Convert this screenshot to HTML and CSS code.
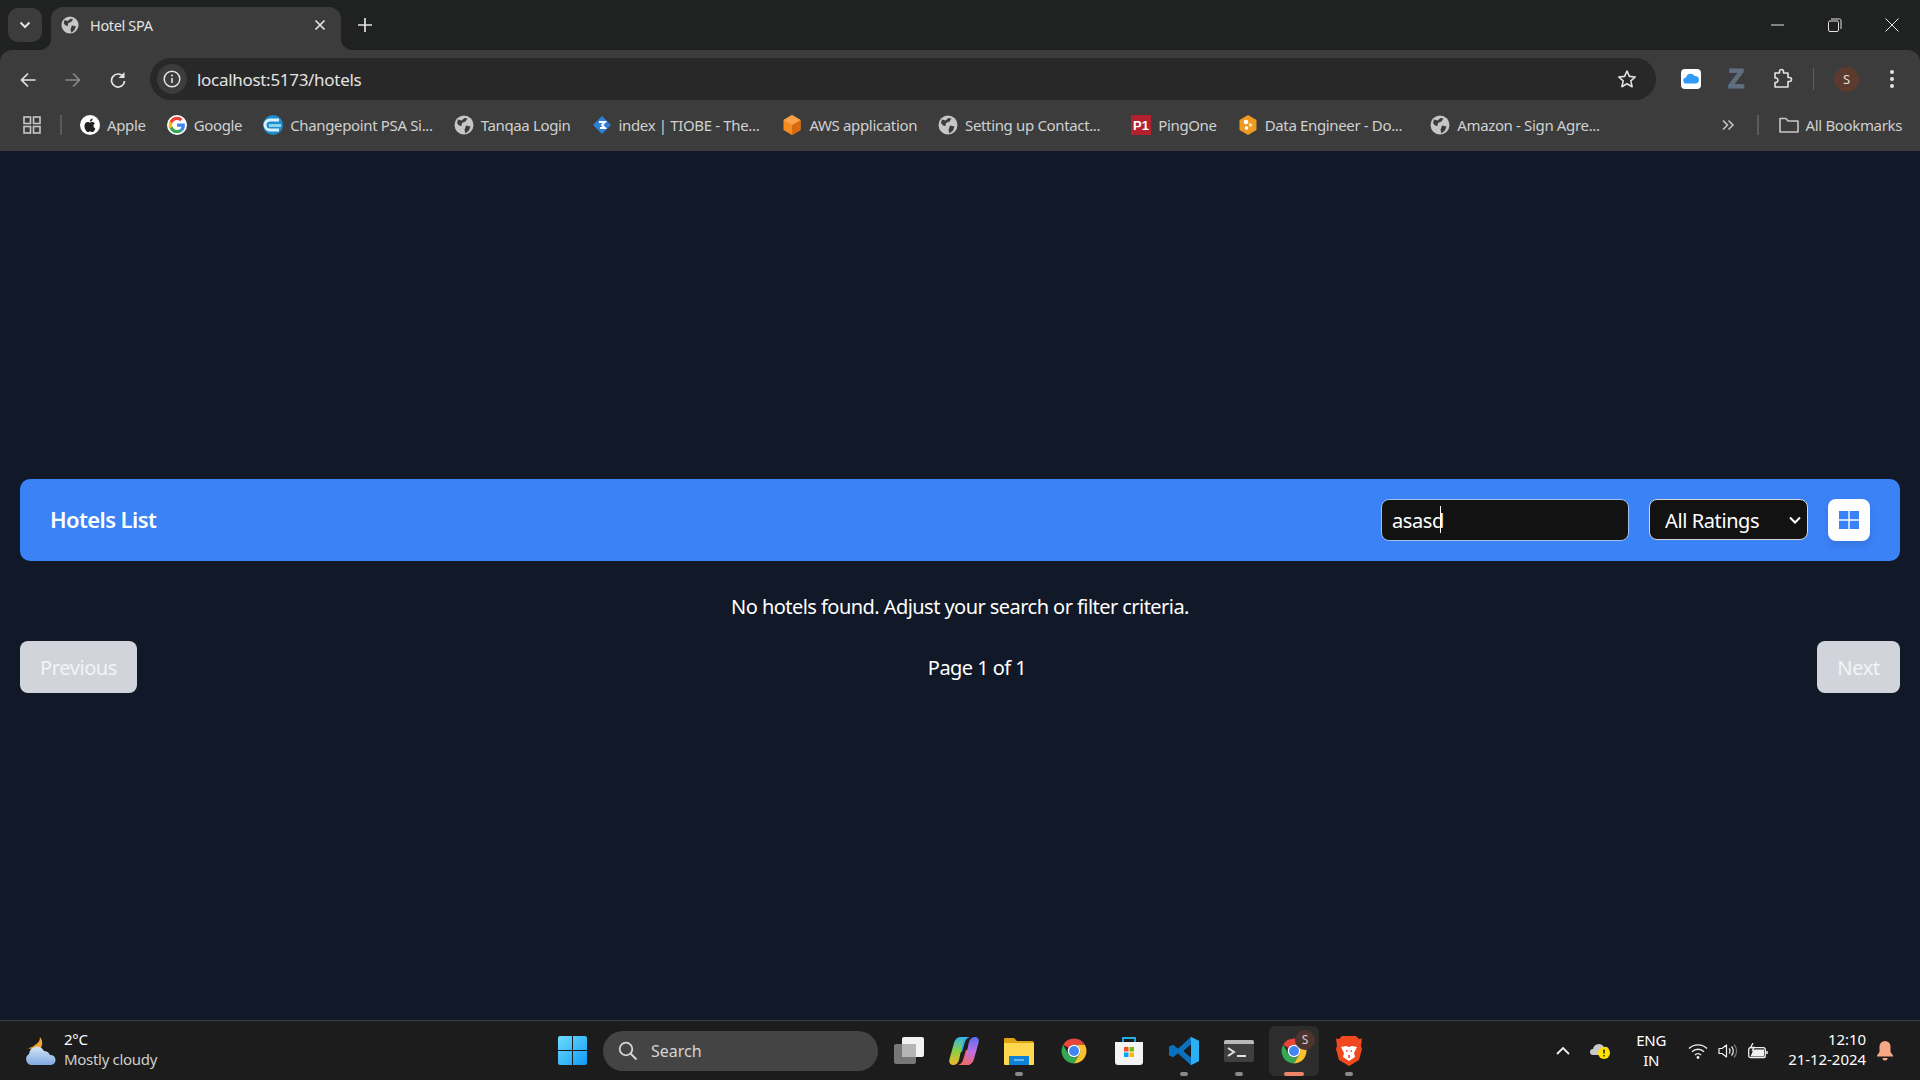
FILE: index.html
```html
<!DOCTYPE html>
<html lang="en">
<head>
  <meta charset="UTF-8" />
  <meta name="viewport" content="width=device-width, initial-scale=1.0"/>
  <title>Hotel SPA</title>
  <link rel="stylesheet" href="styles.css">
</head>
<body>
  <svg class="defs" aria-hidden="true">
    <defs>
      <linearGradient id="winblue" x1="0" y1="0" x2="1" y2="1"><stop offset="0" stop-color="#6fdcff"/><stop offset="1" stop-color="#0f9bf5"/></linearGradient>
      <linearGradient id="cloudg" x1="0" y1="0" x2="0" y2="1"><stop offset="0" stop-color="#d5e4f8"/><stop offset="1" stop-color="#7fa9e0"/></linearGradient>
      <linearGradient id="copa" x1="0" y1="0" x2="0" y2="1"><stop offset="0" stop-color="#2fb6e8"/><stop offset=".5" stop-color="#8bd044"/><stop offset="1" stop-color="#f4b52e"/></linearGradient>
      <linearGradient id="copb" x1="0" y1="0" x2="0" y2="1"><stop offset="0" stop-color="#5b6cf0"/><stop offset=".5" stop-color="#b96fe8"/><stop offset="1" stop-color="#f0696a"/></linearGradient>
    </defs>
    <symbol id="globe" viewBox="0 0 20 20">
      <circle cx="10" cy="10" r="9.5" fill="#c4c7c5"/>
      <path d="M4 4.5l3.5 1 3-2.5 3 .5-2 3-3.5 1.5-.5 3-2.5-.5-2-2.5zM12 10.5l4.5 1-1.5 4-3.5 3-1-3.5z" fill="#3c3c3c"/>
    </symbol>
    <symbol id="chrome" viewBox="0 0 48 48">
      <path d="M24 4A20 20 0 0 1 41.32 14H24A10 10 0 0 0 15.34 19L6.68 14A20 20 0 0 1 24 4Z" fill="#e8453c"/>
      <path d="M6.68 14A20 20 0 0 0 24 44L32.66 29A10 10 0 0 1 15.34 29Z" fill="#34a853"/>
      <path d="M41.32 14H24A10 10 0 0 1 32.66 29L24 44A20 20 0 0 0 41.32 14Z" fill="#fbc02d"/>
      <circle cx="24" cy="24" r="10" fill="#fff"/>
      <circle cx="24" cy="24" r="8" fill="#4285f4"/>
    </symbol>
  </svg>

  <header class="chrome">
    <div class="tabstrip">
      <div class="tabsearch">
        <svg width="12" height="8" viewBox="0 0 12 8"><path d="M1.5 1.5L6 6l4.5-4.5" fill="none" stroke="#e3e3e3" stroke-width="2"/></svg>
      </div>
      <div class="tab">
        <svg class="fav tab-fav"><use href="#globe"/></svg>
        <span class="tab-title">Hotel SPA</span>
        <svg class="tab-close" width="12" height="12" viewBox="0 0 12 12"><path d="M1.5 1.5l9 9M10.5 1.5l-9 9" stroke="#e3e3e3" stroke-width="1.7"/></svg>
      </div>
      <svg class="newtab" width="14" height="14" viewBox="0 0 14 14"><path d="M7 0v14M0 7h14" stroke="#e3e3e3" stroke-width="1.7"/></svg>
      <div class="winctrls">
        <svg width="14" height="14" viewBox="0 0 14 14"><path d="M0 7h13" stroke="#e3e3e3"/></svg>
        <svg width="14" height="14" viewBox="0 0 14 14"><rect x=".5" y="3" width="10" height="10.5" rx="1.5" fill="none" stroke="#e3e3e3"/><path d="M3 1h8.5a1.5 1.5 0 0 1 1.5 1.5V11" fill="none" stroke="#e3e3e3"/></svg>
        <svg width="14" height="14" viewBox="0 0 14 14"><path d="M.5.5l13 13M13.5.5l-13 13" stroke="#e3e3e3"/></svg>
      </div>
    </div>

    <div class="toolbar">
      <svg class="navbtn" viewBox="0 0 16 16"><path d="M15.5 8H1.5M8 1.5L1.5 8 8 14.5" fill="none" stroke="#e3e3e3" stroke-width="1.7"/></svg>
      <svg class="navbtn" viewBox="0 0 16 16"><path d="M.5 8h14M8 1.5L14.5 8 8 14.5" fill="none" stroke="#8a8a8a" stroke-width="1.7"/></svg>
      <svg class="navbtn" viewBox="0 0 16 16"><path d="M13.5 5A6.5 6.5 0 1 0 14.5 9" fill="none" stroke="#e3e3e3" stroke-width="1.7"/><path d="M14.5 0v6h-6z" fill="#e3e3e3"/></svg>
      <div class="omnibox">
        <div class="siteinfo">
          <svg width="18" height="18" viewBox="0 0 18 18"><circle cx="9" cy="9" r="7.8" fill="none" stroke="#e3e3e3" stroke-width="1.5"/><path d="M9 8v5" stroke="#e3e3e3" stroke-width="1.6"/><circle cx="9" cy="5.5" r="1" fill="#e3e3e3"/></svg>
        </div>
        <span class="url">localhost:5173/hotels</span>
        <svg class="star" width="20" height="20" viewBox="0 0 20 20"><path d="M10 2l2.4 5.4 5.8.6-4.4 3.9 1.3 5.8L10 14.7l-5.1 3 1.3-5.8L1.8 8l5.8-.6z" fill="none" stroke="#e3e3e3" stroke-width="1.6" stroke-linejoin="round"/></svg>
      </div>
      <div class="exts">
        <svg width="20" height="20" viewBox="0 0 20 20"><rect width="20" height="20" rx="4" fill="#fff"/><path d="M5.5 14.5a3 3 0 0 1-.4-6A4.5 4.5 0 0 1 13.4 7a3.8 3.8 0 0 1 1.4 7.5z" fill="#2f9bf5"/></svg>
        <span class="ext-z">Z</span>
        <svg width="22" height="22" viewBox="0 0 22 22"><path d="M4 5h4.5V3.5a2 2 0 0 1 4 0V5H17v4.5h1.5a2 2 0 0 1 0 4H17V19H4v-4.5h1.5a2.5 2.5 0 0 0 0-4.5H4z" fill="none" stroke="#e3e3e3" stroke-width="1.6" stroke-linejoin="round"/></svg>
        <span class="tb-sep"></span>
        <span class="avatar">S</span>
        <svg class="dots" width="6" height="20" viewBox="0 0 6 20"><circle cx="3" cy="3" r="2" fill="#e3e3e3"/><circle cx="3" cy="10" r="2" fill="#e3e3e3"/><circle cx="3" cy="17" r="2" fill="#e3e3e3"/></svg>
      </div>
    </div>

    <div class="bookmarks">
      <svg class="apps" width="18" height="18" viewBox="0 0 18 18"><g fill="none" stroke="#c7c7c7" stroke-width="1.6"><rect x="1" y="1" width="6.5" height="6.5"/><rect x="10.5" y="1" width="6.5" height="6.5"/><rect x="1" y="10.5" width="6.5" height="6.5"/><rect x="10.5" y="10.5" width="6.5" height="6.5"/></g></svg>
      <span class="bm-sep"></span>
      <a class="bm">
        <svg class="fav" viewBox="0 0 20 20"><circle cx="10" cy="10" r="10" fill="#fff"/><path d="M13.5 10.8c0-1.7 1.3-2.400 1.400-2.500-.8-1.100-2-1.300-2.400-1.300-1-.1-2 .6-2.500.6s-1.300-.6-2.200-.6c-1.100 0-2.200.7-2.800 1.700-1.200 2-.3 5.100.9 6.700.6.800 1.200 1.700 2.100 1.700s1.200-.5 2.200-.5 1.300.5 2.200.5 1.500-.8 2-1.700c.6-.9.900-1.800.9-1.900-.1 0-1.800-.7-1.800-2.700zM11.900 5.700c.5-.6.800-1.400.7-2.200-.7 0-1.500.5-2 1-.4.500-.8 1.300-.7 2.100.8.100 1.500-.4 2-.9z" fill="#222"/></svg>
        <span>Apple</span>
      </a>
      <a class="bm">
        <svg class="fav" viewBox="-5 -5 58 58"><circle cx="24" cy="24" r="29" fill="#fff"/><path d="M24 9.500c3.540 0 6.710 1.220 9.210 3.600l6.850-6.850C35.900 2.380 30.470 0 24 0 14.620 0 6.510 5.380 2.560 13.220l7.980 6.190C12.430 13.720 17.740 9.500 24 9.500z" fill="#ea4335"/><path d="M46.980 24.550c0-1.570-.15-3.090-.38-4.550H24v9.020h12.940c-.58 2.960-2.260 5.480-4.780 7.180l7.730 6c4.510-4.180 7.090-10.360 7.090-17.650z" fill="#4285f4"/><path d="M10.530 28.590c-.48-1.450-.76-2.990-.76-4.590s.27-3.140.76-4.590l-7.980-6.190C.92 16.460 0 20.120 0 24c0 3.880.92 7.540 2.560 10.780l7.970-6.190z" fill="#fbbc05"/><path d="M24 48c6.480 0 11.930-2.130 15.890-5.810l-7.730-6c-2.150 1.450-4.920 2.300-8.160 2.300-6.260 0-11.570-4.220-13.470-9.910l-7.980 6.190C6.510 42.620 14.620 48 24 48z" fill="#34a853"/></svg>
        <span>Google</span>
      </a>
      <a class="bm">
        <svg class="fav" viewBox="0 0 20 20"><circle cx="10" cy="10" r="10" fill="#1c8ed0"/><path d="M16 5H7a5 5 0 0 0 0 10h9" fill="none" stroke="#d8f0fb" stroke-width="3"/><path d="M6 9h12v3H6z" fill="#8fd2f0"/></svg>
        <span>Changepoint PSA Si...</span>
      </a>
      <a class="bm"><svg class="fav"><use href="#globe"/></svg><span>Tanqaa Login</span></a>
      <a class="bm bm-index">
        <svg class="fav" viewBox="0 0 20 20"><path d="M10 1l9 9-9 9-9-9z" fill="#2f7fd6"/><path d="M7 7h6l-3 3 3 3H8" fill="none" stroke="#fff" stroke-width="1.8"/></svg>
        <span>index | TIOBE - The...</span>
      </a>
      <a class="bm">
        <svg class="fav" viewBox="0 0 20 20"><path d="M10 0l8.500 5v10L10 20l-8.500-5V5z" fill="#f58a1f"/><path d="M10 10l8.500-5v10L10 20z" fill="#d96a12"/><path d="M10 0l8.500 5L10 10 1.500 5z" fill="#fba24a"/></svg>
        <span>AWS application</span>
      </a>
      <a class="bm bm-setting"><svg class="fav"><use href="#globe"/></svg><span>Setting up Contact...</span></a>
      <a class="bm">
        <svg class="fav" viewBox="0 0 20 20"><rect width="20" height="20" fill="#b3212f"/><text class="p1" x="10" y="15" text-anchor="middle">P1</text></svg>
        <span>PingOne</span>
      </a>
      <a class="bm bm-data">
        <svg class="fav" viewBox="0 0 20 20"><path d="M10 0l8.500 5v10L10 20l-8.500-5V5z" fill="#ef9a22"/><circle cx="8" cy="7" r="2.300" fill="#fff"/><circle cx="12.500" cy="10" r="1.800" fill="#fde3b8"/><circle cx="8.500" cy="13" r="1.800" fill="#fff"/></svg>
        <span>Data Engineer - Do...</span>
      </a>
      <a class="bm"><svg class="fav"><use href="#globe"/></svg><span>Amazon - Sign Agre...</span></a>
      <svg class="bm-more" width="12" height="12" viewBox="0 0 12 12"><path d="M1 1.500L5.500 6 1 10.500M6.500 1.500L11 6l-4.500 4.500" fill="none" stroke="#c7c7c7" stroke-width="1.500"/></svg>
      <span class="bm-sep bm-sep-right"></span>
      <a class="bm bm-all">
        <svg class="fav" viewBox="0 0 20 20"><path d="M1 3.500h6l2 2.500h10v11H1z" fill="none" stroke="#c7c7c7" stroke-width="1.600" stroke-linejoin="round"/></svg>
        <span>All Bookmarks</span>
      </a>
    </div>
  </header>

  <main class="page">
    <section class="hotels-bar">
      <h1>Hotels List</h1>
      <div class="hotels-controls">
        <div class="search-box">
          <input type="text" class="search-input" value="asasd" />
          <span class="caret"></span>
        </div>
        <select class="rating-select">
          <option>All Ratings</option>
        </select>
        <button class="view-toggle" aria-label="Grid view">
          <svg width="20" height="18" viewBox="0 0 20 18"><path d="M0 0h9.300v8.300H0zM10.700 0H20v8.300h-9.300zM0 9.700h9.300V18H0zM10.700 9.700H20V18h-9.300z" fill="#3b82f6"/></svg>
        </button>
      </div>
    </section>

    <p class="empty-msg">No hotels found. Adjust your search or filter criteria.</p>

    <div class="pagination">
      <button class="page-btn page-prev" disabled>Previous</button>
      <span class="page-info">Page 1 of 1</span>
      <button class="page-btn page-next" disabled>Next</button>
    </div>
  </main>

  <footer class="taskbar">
    <div class="weather">
      <svg width="32" height="30" viewBox="0 0 32 30"><path d="M16 1a9 9 0 0 1-1 13L2 12a10 10 0 0 0 9-3 9 9 0 0 0 5-8z" fill="#f3a531"/><path d="M7 29a6 6 0 0 1-2-11 8 8 0 0 1 15-3 7 7 0 0 1 6 4 5 5 0 0 1 1 10z" fill="url(#cloudg)"/></svg>
      <div class="weather-text">
        <span class="temp">2°C</span>
        <span class="cond">Mostly cloudy</span>
      </div>
    </div>

    <div class="tb-center">
      <svg class="tb-start" width="29" height="29" viewBox="0 0 29 29"><path d="M0 2a2 2 0 0 1 2-2h12v14H0zM15 0h12a2 2 0 0 1 2 2v12H15zM0 15h14v14H2a2 2 0 0 1-2-2zM15 15h14v12a2 2 0 0 1-2 2H15z" fill="url(#winblue)"/></svg>
      <div class="tb-search">
        <svg width="20" height="20" viewBox="0 0 20 20"><circle cx="8" cy="8" r="6.300" fill="none" stroke="#d5d5d5" stroke-width="1.800"/><path d="M12.500 12.500l6 6" stroke="#d5d5d5" stroke-width="2"/></svg>
        <span>Search</span>
      </div>
      <svg class="tb-task" width="30" height="30" viewBox="0 0 30 30"><rect y="8" width="22" height="20" rx="2" fill="#777"/><rect x="8" y="1" width="22" height="20" rx="2" fill="#f2f2f2"/><rect x="8" y="8" width="14" height="13" fill="#b5b5b5"/></svg>
      <div class="tb-app">
        <svg width="30" height="30" viewBox="0 0 30 30"><path d="M12 1h11c-4 0-6 2-7 5l-3 10H4L6 7c1-4 3-6 6-6z" fill="#2fa8e8"/><path d="M18 29H7c4 0 6-2 7-5l3-10h9l-2 9c-1 4-3 6-6 6z" fill="#f0696a"/><path d="M12 1h8c-3 0-5 2-6 5L10 24c-.7 3-3 5-6 5-3 0-4.500-2.500-3.500-6L5 7c1-4 4-6 7-6z" fill="url(#copa)"/><path d="M18 29h-8c3 0 5-2 6-5l4-18c.7-3 3-5 6-5 3 0 4.500 2.500 3.500 6L25 23c-1 4-4 6-7 6z" fill="url(#copb)"/></svg>
      </div>
      <div class="tb-app tb-run">
        <svg width="30" height="30" viewBox="0 0 30 30"><path d="M0 3a1 1 0 0 1 1-1h9l3 3h15a2 2 0 0 1 2 2v3H0z" fill="#e0a412"/><path d="M0 7h30v21a1 1 0 0 1-1 1H1a1 1 0 0 1-1-1z" fill="#ffd84f"/><path d="M5 20h20v9H5z" fill="#0c82d8"/><path d="M10 24h10" stroke="#7fcaf5" stroke-width="1.500"/></svg>
      </div>
      <div class="tb-app"><svg width="30" height="30"><use href="#chrome"/></svg></div>
      <div class="tb-app">
        <svg width="30" height="30" viewBox="0 0 30 30"><path d="M9 6V2h12v4" fill="none" stroke="#22b2e8" stroke-width="1.800"/><path d="M1 6h28v20a3 3 0 0 1-3 3H4a3 3 0 0 1-3-3z" fill="#f4f4f4"/><path d="M10 11h4.500v4.500H10z" fill="#f25022"/><path d="M15.500 11H20v4.500h-4.500z" fill="#7fba00"/><path d="M10 16.500h4.500V21H10z" fill="#00a4ef"/><path d="M15.500 16.500H20V21h-4.500z" fill="#ffb900"/></svg>
      </div>
      <div class="tb-app tb-run">
        <svg width="30" height="30" viewBox="0 0 30 30"><path d="M22 1l8 4v20l-8 4-13-12-5 4-4-2V11l4-2 5 4z" fill="#1f9cf0"/><path d="M22 1l8 4v20l-8 4z" fill="#2bb0f5"/><path d="M22 8l-8 7 8 7z" fill="#1c1c1c"/><path d="M9 13l-5-4-4 2v8l4 2 5-4 13 12V22l-8-7 8-7V1z" fill="#0a70c0"/></svg>
      </div>
      <div class="tb-app tb-run">
        <svg width="30" height="22" viewBox="0 0 30 22"><rect width="30" height="22" rx="2" fill="#3f3f3f"/><path d="M0 2a2 2 0 0 1 2-2h26a2 2 0 0 1 2 2v2H0z" fill="#b8b8b8"/><path d="M4 8l6 4-6 4" fill="none" stroke="#e0e0e0" stroke-width="2"/><path d="M13 16h9" stroke="#e0e0e0" stroke-width="2"/></svg>
      </div>
      <div class="tb-app tb-active">
        <svg width="30" height="30"><use href="#chrome"/></svg>
        <span class="tb-badge">S</span>
      </div>
      <div class="tb-app tb-run">
        <svg width="26" height="30" viewBox="0 0 26 30"><path d="M6 0h14l3 3 3-.5-1 7.500 1 3-3 11-10 6-10-6L0 13l1-3-1-7.500L3 3z" fill="#f1491f"/><path d="M5 11l5-1 3 1 3-1 5 1-3 6 1 4-6 4-6-4 1-4z" fill="#fff"/><path d="M10 15h1.500M14.500 15H16M13 19v3" stroke="#f1491f" stroke-width="1.600"/></svg>
      </div>
    </div>

    <div class="tray">
      <svg class="tray-chev" width="14" height="9" viewBox="0 0 14 9"><path d="M1 8l6-6 6 6" fill="none" stroke="#f0f0f0" stroke-width="1.800"/></svg>
      <svg class="tray-od" width="20" height="17" viewBox="0 0 20 17"><path d="M3 13a3 3 0 0 1 0-6 6 6 0 0 1 11-2 4 4 0 0 1 2 8z" fill="#c9c9c9"/><circle cx="14" cy="11" r="6" fill="#ffe000"/><path d="M14 7.500v4M14 13v1.500" stroke="#222" stroke-width="1.500"/></svg>
      <div class="tray-lang"><span>ENG</span><span>IN</span></div>
      <div class="tray-icons">
        <svg width="20" height="16" viewBox="0 0 20 16"><path d="M1 5.500a13 13 0 0 1 18 0M4 8.800a8.500 8.500 0 0 1 12 0M7 12a4 4 0 0 1 6 0" fill="none" stroke="#f0f0f0" stroke-width="1.400"/><circle cx="10" cy="14.500" r="1.400" fill="#f0f0f0"/></svg>
        <svg width="20" height="16" viewBox="0 0 20 16"><path d="M1 5.500h3L8.500 2v12L4 10.500H1z" fill="none" stroke="#f0f0f0" stroke-width="1.200" stroke-linejoin="round"/><path d="M11 5.500a3.500 3.500 0 0 1 0 5M13.500 3.500a6.500 6.500 0 0 1 0 9" fill="none" stroke="#f0f0f0" stroke-width="1.200"/><path d="M16 1.500a9.500 9.500 0 0 1 0 13" fill="none" stroke="#777" stroke-width="1.200"/></svg>
        <svg width="20" height="16" viewBox="0 0 20 16"><rect x=".7" y="4.700" width="16.600" height="10" rx="2" fill="none" stroke="#f0f0f0" stroke-width="1.300"/><path d="M2.500 13.500l3-7H16v7z" fill="#f0f0f0"/><path d="M19 8v3" stroke="#f0f0f0" stroke-width="1.500"/><path d="M5 0L2.500 4.500H6L4 8" fill="none" stroke="#f0f0f0" stroke-width="1.300"/></svg>
      </div>
      <div class="tray-clock"><span>12:10</span><span>21-12-2024</span></div>
      <svg class="tray-bell" width="16" height="20" viewBox="0 0 16 20"><path d="M8 0a5.500 5.500 0 0 1 5.500 5.500V11l2.500 3.500v1H0v-1L2.500 11V5.500A5.500 5.500 0 0 1 8 0z" fill="#f6a886"/><path d="M5.500 17h5a2.500 2.500 0 0 1-5 0z" fill="#f6a886"/></svg>
    </div>
  </footer>
</body>
</html>
```

FILE: styles.css
```css
* {
  box-sizing: border-box;
}
html, body {
  margin: 0;
  height: 100%;
}
body {
  display: flex;
  flex-direction: column;
  width: 1920px;
  height: 1080px;
  overflow: hidden;
  background-color: #111827;
  color: #fff;
  font-family: "Noto Sans", "Open Sans", sans-serif;
}
.defs {
  width: 0;
  height: 0;
  flex: none;
}
svg {
  flex: none;
  display: block;
}
.fav {
  width: 20px;
  height: 20px;
}

/* browser frame */
.chrome {
  flex: none;
  height: 151px;
  display: flex;
  flex-direction: column;
  background-color: #202221;
  font-size: 15px;
  letter-spacing: -0.35px;
}
.tabstrip {
  height: 50px;
  display: flex;
  align-items: flex-end;
  padding-left: 8px;
}
.tabsearch {
  width: 34px;
  height: 34px;
  margin-bottom: 8px;
  margin-right: 9px;
  display: flex;
  align-items: center;
  justify-content: center;
  background-color: #3c3c3c;
  border-radius: 10px;
}
.tab {
  position: relative;
  width: 290px;
  height: 43px;
  display: flex;
  align-items: center;
  padding: 0 15px 7px 10px;
  gap: 9px;
  background-color: #3c3c3c;
  border-radius: 12px 12px 0 0;
  color: #e3e3e3;
  font-size: 14.5px;
}
.tab::before,
.tab::after {
  content: "";
  position: absolute;
  bottom: 0;
  width: 12px;
  height: 12px;
}
.tab::before {
  left: -12px;
  background: radial-gradient(circle at 0 0, transparent 12px, #3c3c3c 12.5px);
}
.tab::after {
  right: -12px;
  background: radial-gradient(circle at 100% 0, transparent 12px, #3c3c3c 12.5px);
}
.tab-fav {
  width: 18px;
  height: 18px;
  margin-right: 2px;
}
.tab-title {
  flex: 1;
}
.newtab {
  margin: 0 0 18px 17px;
}
.winctrls {
  margin-left: auto;
  align-self: center;
  display: flex;
  gap: 43px;
  padding-right: 21px;
}
.toolbar {
  height: 50px;
  padding-top: 8px;
  display: flex;
  align-items: flex-start;
  padding-left: 20px;
  background-color: #3c3c3c;
  border-radius: 12px 12px 0 0;
}
.navbtn {
  width: 16px;
  height: 16px;
  margin: 14px 29px 0 0;
}
.omnibox {
  width: 1506px;
  height: 42px;
  margin-left: -5px;
  display: flex;
  align-items: center;
  padding: 0 19px 0 7px;
  background-color: #282828;
  border-radius: 21px;
}
.siteinfo {
  width: 30px;
  height: 30px;
  display: flex;
  align-items: center;
  justify-content: center;
  background-color: #3c3c3c;
  border-radius: 50%;
}
.url {
  margin-left: 10px;
  font-size: 17px;
  letter-spacing: -0.3px;
  color: #e3e3e3;
}
.star {
  margin-left: auto;
}
.exts {
  display: flex;
  align-items: center;
  height: 42px;
  margin-left: 25px;
  gap: 25px;
}
.ext-z {
  width: 20px;
  height: 20px;
  line-height: 20px;
  text-align: center;
  font-family: "Liberation Sans", sans-serif;
  font-weight: 700;
  font-size: 27px;
  color: #5f6f80;
  -webkit-text-stroke: 1px #5f6f80;
}
.tb-sep {
  width: 1px;
  height: 22px;
  margin: 0 -2px 0 -5px;
  background-color: #5f5f5f;
}
.avatar {
  width: 25px;
  height: 25px;
  display: flex;
  align-items: center;
  justify-content: center;
  margin-left: -3px;
  border-radius: 50%;
  background-color: #5c3a2e;
  color: #e8dcd8;
  font-size: 13px;
}
.dots {
  margin-left: 5px;
}
.bookmarks {
  height: 51px;
  padding: 0 0 1px 23px;
  display: flex;
  align-items: center;
  background-color: #3c3c3c;
  color: #d0d0d0;
}
.bm {
  display: flex;
  align-items: center;
  gap: 7px;
  white-space: nowrap;
}
.bm-sep {
  width: 2px;
  height: 20px;
  margin: 0 18px 0 19px;
  background-color: #5a5a5a;
}
.bm + .bm {
  margin-left: 21px;
}
.bm-index {
  margin-right: 2px;
}
.bm-setting {
  margin-right: 10px;
}
.bm-data {
  margin-right: 7px;
}
.bm-more {
  margin-left: auto;
}
.bm-sep-right {
  margin: 0 20px 0 23px;
}
.bm-all {
  margin-right: 18px;
}
.p1 {
  font-family: "Liberation Sans", sans-serif;
  font-weight: 700;
  font-size: 13px;
  fill: #fff;
  letter-spacing: 0;
}

/* hotel list page */
.page {
  flex: 1;
  display: flex;
  flex-direction: column;
  justify-content: center;
  padding: 0 20px;
  font-size: 20px;
  letter-spacing: -0.55px;
}
.hotels-bar {
  height: 82px;
  display: flex;
  align-items: center;
  justify-content: space-between;
  padding: 0 30px;
  background-color: #3b82f6;
  border-radius: 10px;
}
.hotels-bar h1 {
  margin: 0 0 2px;
  font-size: 22px;
  font-weight: 600;
  letter-spacing: -0.6px;
}
.hotels-controls {
  display: flex;
  align-items: center;
  gap: 20px;
}
.search-box {
  position: relative;
  width: 248px;
}
.search-input {
  width: 100%;
  height: 42px;
  padding: 2px 10px 0;
  border: 1px solid #9ec1f2;
  border-radius: 8px;
  background-color: #121212;
  color: #fff;
  font: inherit;
  letter-spacing: -0.4px;
  outline: none;
}
.caret {
  position: absolute;
  left: 59px;
  top: 7px;
  width: 1px;
  height: 27px;
  background-color: #fff;
}
.rating-select {
  width: 159px;
  height: 41px;
  padding: 2px 0 0 15px;
  border: 1px solid #d5d5d5;
  border-radius: 8px;
  appearance: none;
  background: #121212 url("data:image/svg+xml,%3Csvg xmlns='http://www.w3.org/2000/svg' width='12' height='8'%3E%3Cpath d='M1 1.500l5 5 5-5' fill='none' stroke='%23fff' stroke-width='2'/%3E%3C/svg%3E") no-repeat right 6px center;
  color: #fff;
  font: inherit;
  letter-spacing: -0.4px;
}
.view-toggle {
  width: 42px;
  height: 42px;
  display: flex;
  align-items: center;
  justify-content: center;
  padding: 0;
  border: none;
  border-radius: 8px;
  background-color: #fff;
  box-shadow: 0 4px 6px rgba(0,0,0,0.1);
}
.empty-msg {
  margin: 32px 0 20px;
  line-height: 28px;
  text-align: center;
}
.pagination {
  display: flex;
  align-items: center;
  justify-content: space-between;
}
.page-info {
  padding-top: 2px;
}
.page-btn {
  height: 52px;
  padding: 2px 0 0;
  border: none;
  border-radius: 8px;
  background-color: #d1d5db;
  color: #f3f4f6;
  font: inherit;
  letter-spacing: -0.4px;
}
.page-prev {
  width: 117px;
}
.page-next {
  width: 83px;
}

/* windows taskbar */
.taskbar {
  flex: none;
  height: 60px;
  display: grid;
  grid-template-columns: 1fr auto 1fr;
  align-items: center;
  background-color: #1c1c1c;
  border-top: 1px solid #3d3d3d;
  font-size: 15px;
  letter-spacing: -0.3px;
}
.weather {
  display: flex;
  align-items: center;
  gap: 8px;
  padding-left: 24px;
  line-height: 20px;
}
.weather-text {
  display: flex;
  flex-direction: column;
  padding-bottom: 4px;
}
.cond {
  color: #cfcfcf;
}
.tb-center {
  display: flex;
  align-items: center;
  padding-left: 2px;
}
.tb-search {
  width: 275px;
  height: 40px;
  margin: 0 16px;
  padding-left: 15px;
  display: flex;
  align-items: center;
  gap: 13px;
  background-color: #444;
  border-radius: 20px;
  color: #d5d5d5;
  font-size: 16px;
  letter-spacing: 0;
}
.tb-app {
  position: relative;
  width: 30px;
  height: 30px;
  margin-left: 25px;
  display: flex;
  align-items: center;
  justify-content: center;
}
.tb-run::after,
.tb-active::after {
  content: "";
  position: absolute;
  left: 11px;
  top: 36px;
  width: 8px;
  height: 4px;
  border-radius: 2px;
  background-color: #8a8a8a;
}
.tb-active::before {
  content: "";
  position: absolute;
  inset: -10px;
  background-color: #2d2d2d;
  border-radius: 6px;
  z-index: 0;
}
.tb-active svg {
  position: relative;
}
.tb-active::after {
  left: 5px;
  width: 20px;
  background-color: #f08468;
}
.tb-badge {
  position: absolute;
  left: 16px;
  top: -6px;
  width: 20px;
  height: 20px;
  display: flex;
  align-items: center;
  justify-content: center;
  border-radius: 50%;
  background-color: #4e342e;
  color: #d8ccc8;
  font-size: 12px;
}
.tray {
  display: flex;
  align-items: center;
  justify-content: flex-end;
  padding-right: 27px;
  line-height: 20px;
}
.tray-chev {
  margin-right: 20px;
}
.tray-lang {
  display: flex;
  flex-direction: column;
  align-items: center;
  margin-left: 23px;
  width: 36px;
  padding-bottom: 2px;
}
.tray-icons {
  display: flex;
  gap: 10px;
  margin-left: 19px;
}
.tray-clock {
  display: flex;
  flex-direction: column;
  align-items: flex-end;
  margin-left: 20px;
  padding-bottom: 4px;
  letter-spacing: -0.05px;
}
.tray-bell {
  margin-left: 11px;
}
```
